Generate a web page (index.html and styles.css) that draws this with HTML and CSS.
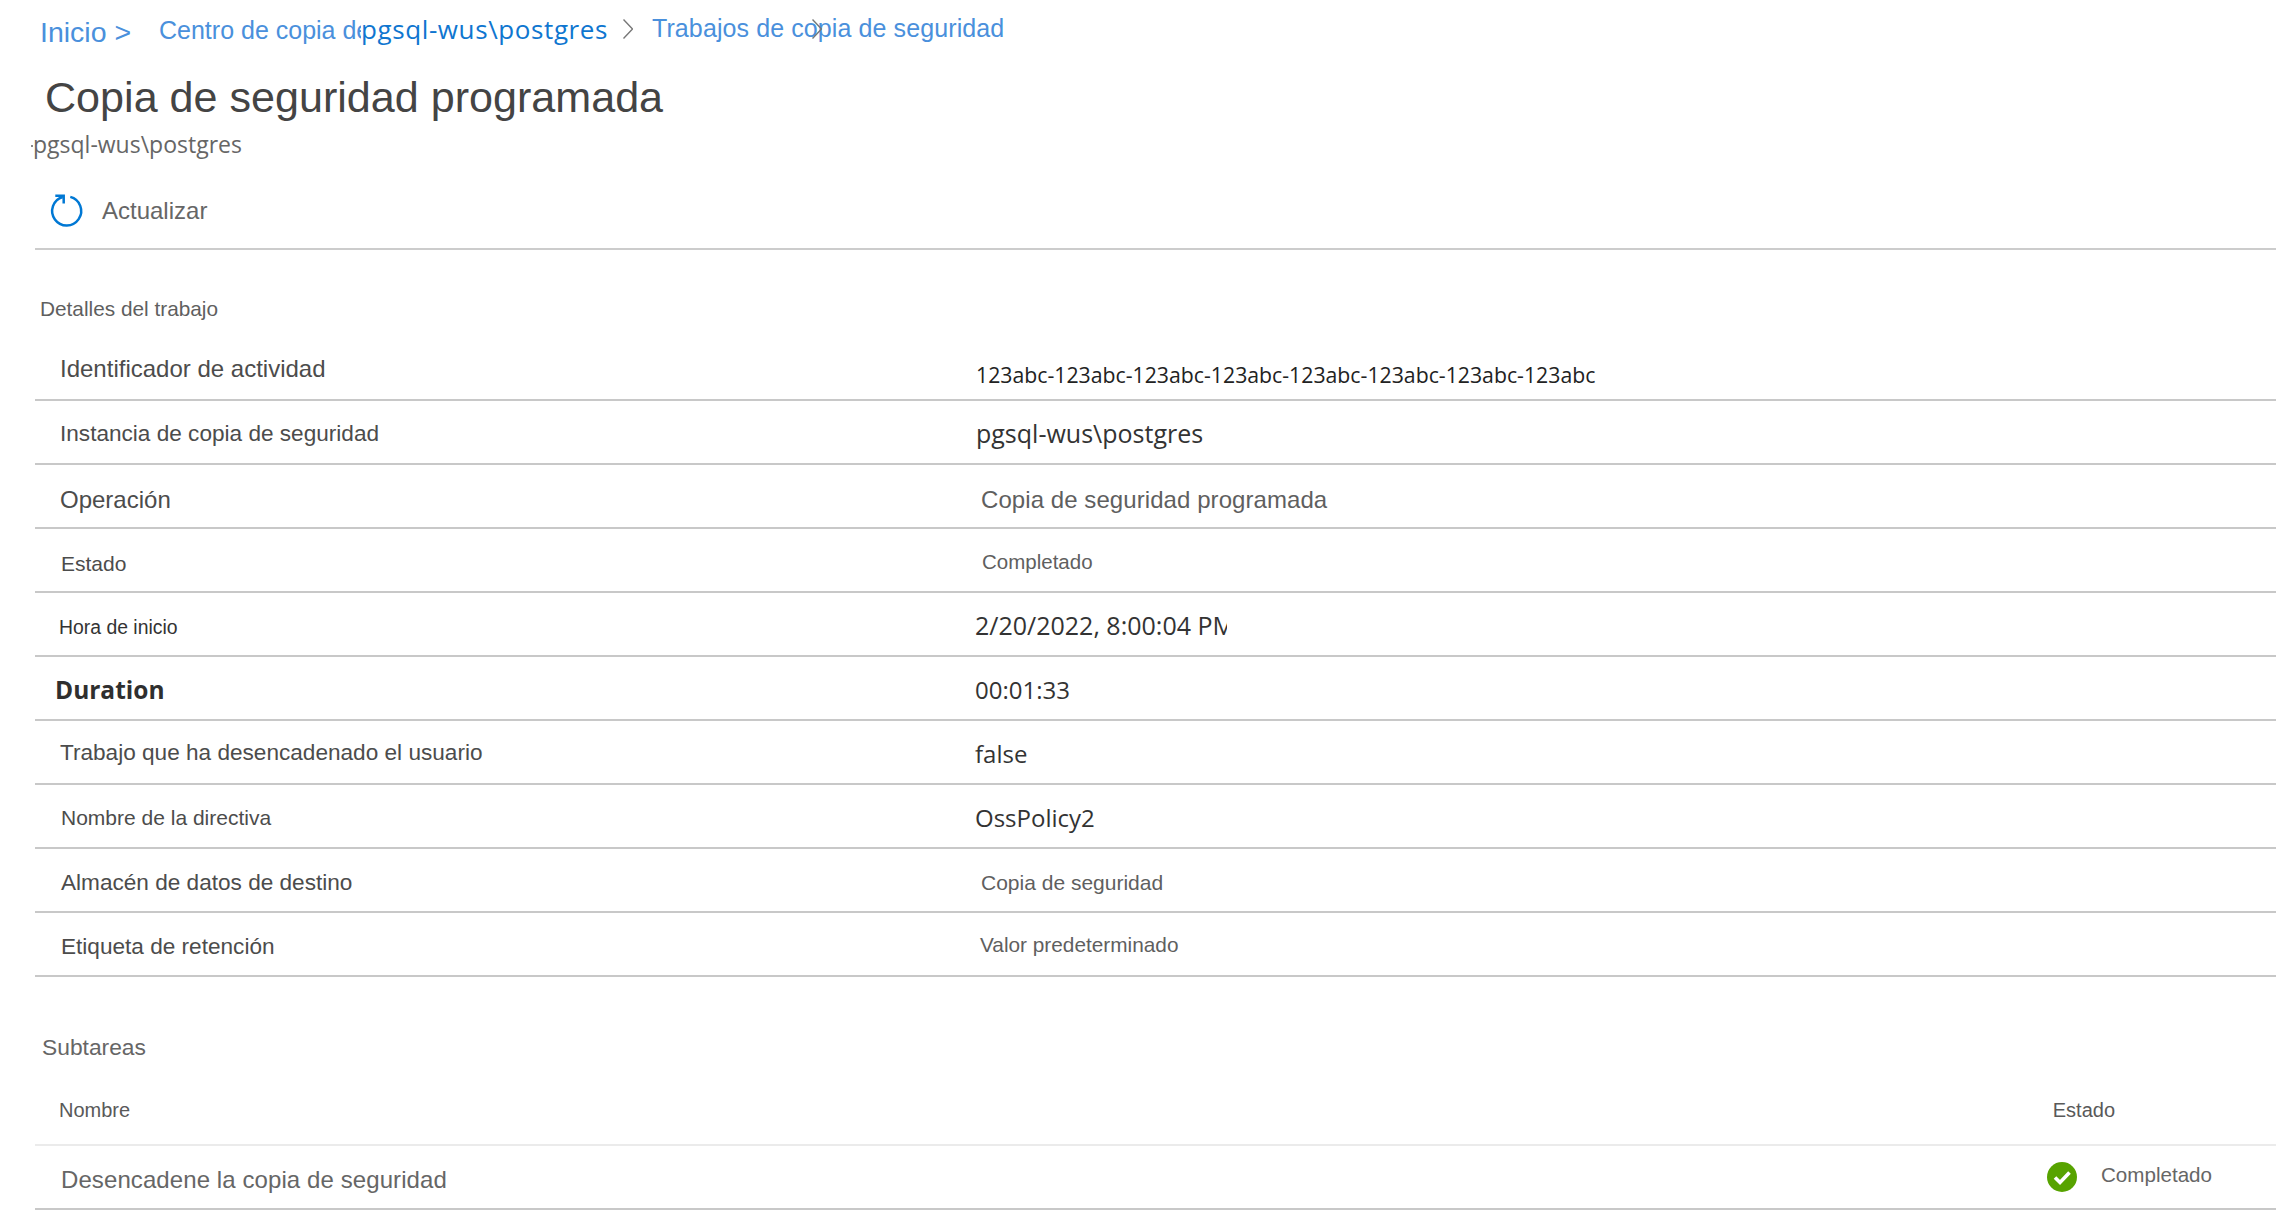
FILE: index.html
```html
<!DOCTYPE html>
<html lang="es">
<head>
<meta charset="utf-8">
<title>Copia de seguridad programada</title>
<link rel="stylesheet" href="styles.css">
</head>
<body>
<nav class="crumbs">
  <a class="crumb-home">Inicio &gt;</a>
  <a class="crumb-center">Centro de copia de seguridad</a>
  <a class="crumb-instance">pgsql-wus\postgres</a>
  <svg class="chevron" viewBox="0 0 10 20"><path d="M.5.5 9.5 10 .5 19.5"/></svg>
  <a class="crumb-jobs">Trabajos de copia de seguridad<svg class="chevron chevron-over" viewBox="0 0 10 20"><path d="M.5.5 9.5 10 .5 19.5"/></svg></a>
</nav>
<h1 class="title">Copia de seguridad programada</h1>
<p class="subtitle">pgsql-wus\postgres</p>
<div class="toolbar">
  <svg class="refresh" viewBox="0 0 36 36"><path d="M13.7 4A14.5 14.5 0 1 0 21.3 3.9"/><path d="M6.3 2.7H14.7V10.5"/></svg>
  <span class="toolbar-label">Actualizar</span>
</div>
<h2 class="section-details">Detalles del trabajo</h2>
<section class="details">
  <div class="row r-id"><span class="label">Identificador de actividad</span><span class="value">123abc-123abc-123abc-123abc-123abc-123abc-123abc-123abc</span></div>
  <div class="row r-inst"><span class="label">Instancia de copia de seguridad</span><span class="value">pgsql-wus\postgres</span></div>
  <div class="row r-op"><span class="label">Operación</span><span class="value">Copia de seguridad programada</span></div>
  <div class="row r-state"><span class="label">Estado</span><span class="value">Completado</span></div>
  <div class="row r-start"><span class="label">Hora de inicio</span><span class="value">2/20/2022, 8:00:04 PM</span></div>
  <div class="row r-dur"><span class="label">Duration</span><span class="value">00:01:33</span></div>
  <div class="row r-user"><span class="label">Trabajo que ha desencadenado el usuario</span><span class="value">false</span></div>
  <div class="row r-pol"><span class="label">Nombre de la directiva</span><span class="value">OssPolicy2</span></div>
  <div class="row r-store"><span class="label">Almacén de datos de destino</span><span class="value">Copia de seguridad</span></div>
  <div class="row r-ret"><span class="label">Etiqueta de retención</span><span class="value">Valor predeterminado</span></div>
</section>
<h2 class="section-sub">Subtareas</h2>
<section class="tasks">
  <div class="task-head"><span class="task-name-head">Nombre</span><span class="task-state-head">Estado</span></div>
  <div class="task-row">
    <span class="task-name">Desencadene la copia de seguridad</span>
    <span class="task-state">
      <svg class="ok" viewBox="0 0 30 30"><circle cx="15" cy="15" r="15"/><path d="M8 15.5 13 20.5 22.5 10.5"/></svg>
      <span class="task-state-text">Completado</span>
    </span>
  </div>
</section>
</body>
</html>
```
FILE: styles.css
```css
* { box-sizing: border-box; }
html, body { margin: 0; padding: 0; background: #fff; }
body { width: 2276px; height: 1231px; overflow: hidden; font-family: "Liberation Sans", Arial, sans-serif; color: #595959; }
h1, h2, p { margin: 0; font-weight: 400; }

.crumbs { display: flex; align-items: flex-start; height: 60px; padding: 14px 0 0 40px; color: #4a90dc; white-space: nowrap; }
.crumb-home { font-size: 28.5px; line-height: 36px; width: 119px; flex: none; }
.crumb-center { font-size: 25px; line-height: 32px; width: 202px; overflow: hidden; flex: none; }
.crumb-instance { font: 26px/32px "Open Sans", sans-serif; letter-spacing: .6px; color: #0f76d0; flex: none; width: 262px; margin-top: -1px; }
.chevron { width: 10px; height: 20px; flex: none; margin: 5px 19px 0 0; }
.chevron path { fill: none; stroke: #777; stroke-width: 1.4; }
.crumb-jobs { position: relative; font-size: 25px; letter-spacing: .1px; line-height: 30px; flex: none; margin-top: -1px; }
.chevron-over { position: absolute; left: 160px; top: 6px; margin: 0; }

.title { font-size: 43.1px; line-height: 50px; color: #444; padding-left: 45px; margin-top: 12px; }
.subtitle { font: 23px/30px "Open Sans", sans-serif; color: #666; padding-left: 33px; margin-top: 7px; }
.subtitle::before { content: ""; display: inline-block; width: 2px; height: 2px; background: #888; margin: 0 0 6px -2px; }

.toolbar { display: flex; align-items: center; gap: 17px; height: 74px; margin-left: 35px; margin-top: 17px; padding: 0 0 2px 14px; border-bottom: 2px solid #ccc; }
.refresh { width: 36px; height: 36px; flex: none; }
.refresh path { fill: none; stroke: #0078d4; stroke-width: 2.5; }
.toolbar-label { font-size: 24px; color: #666; }

.section-details { font-size: 20.8px; line-height: 28px; padding-left: 40px; margin-top: 45px; color: #5f5f5f; }

.details { margin: 14px 0 0 35px; }
.row { display: grid; grid-template-columns: 941px 1fr; align-items: center; height: 64px; border-bottom: 2px solid #c8c8c8; color: #4c4c4c; }
.label { font-size: 22.6px; padding-left: 25px; }
.value { font: 24px "Open Sans", sans-serif; color: #333; white-space: nowrap; }

.r-id .label { font-size: 24px; padding-top: 2px; }
.r-id .value { font-size: 21.25px; color: #222; padding-top: 12px; }
.r-inst .label { padding-top: 4px; }
.r-inst .value { font-size: 25px; padding-top: 2px; }
.r-op .label { font-size: 24px; padding-top: 8px; }
.r-op .value { font: 24px "Liberation Sans", sans-serif; letter-spacing: .07px; color: #5f5f5f; padding: 8px 0 0 5px; }
.r-state .label { font-size: 21px; padding: 8px 0 0 26px; }
.r-state .value { font: 20.5px "Liberation Sans", sans-serif; color: #5f5f5f; padding: 4px 0 0 6px; }
.r-start .label { font-size: 19.4px; padding: 7px 0 0 24px; color: #333; }
.r-start .value { font-size: 25px; width: 252px; overflow: hidden; margin-left: -1px; padding-top: 2px; }
.r-dur .label { font: 700 24.5px "Open Sans", sans-serif; padding: 3px 0 0 20px; color: #2f2f2f; }
.r-dur .value { margin-left: -1px; padding-top: 2px; }
.r-user .label { padding-top: 2px; }
.r-user .value { margin-left: -1px; padding-top: 2px; }
.r-pol .label { font-size: 21px; padding: 4px 0 0 26px; }
.r-pol .value { margin-left: -1px; padding-top: 2px; }
.r-store .label { padding: 6px 0 0 26px; }
.r-store .value { font: 21px "Liberation Sans", sans-serif; color: #5f5f5f; padding: 6px 0 0 5px; }
.r-ret .label { padding: 6px 0 0 26px; }
.r-ret .value { font: 20.8px "Liberation Sans", sans-serif; color: #5f5f5f; padding: 2px 0 0 4px; }

.section-sub { font-size: 22.8px; line-height: 30px; padding-left: 42px; margin-top: 55px; color: #666; }

.tasks { margin: 18px 0 0 35px; }
.task-head { display: flex; justify-content: space-between; align-items: center; height: 66px; padding: 0 161px 4px 24px; border-bottom: 2px solid #ebebeb; font-size: 20px; color: #595959; }
.task-row { display: flex; justify-content: space-between; align-items: center; height: 64px; padding: 0 64px 0 26px; border-bottom: 2px solid #c8c8c8; }
.task-name { font-size: 24px; letter-spacing: .09px; color: #666; padding-top: 5px; }
.task-state { display: flex; align-items: center; gap: 24px; }
.task-state-text { font-size: 20.6px; color: #666; padding-bottom: 4px; }
.ok { width: 30px; height: 30px; }
.ok circle { fill: #57a300; }
.ok path { fill: none; stroke: #fff; stroke-width: 3.6; }
```
